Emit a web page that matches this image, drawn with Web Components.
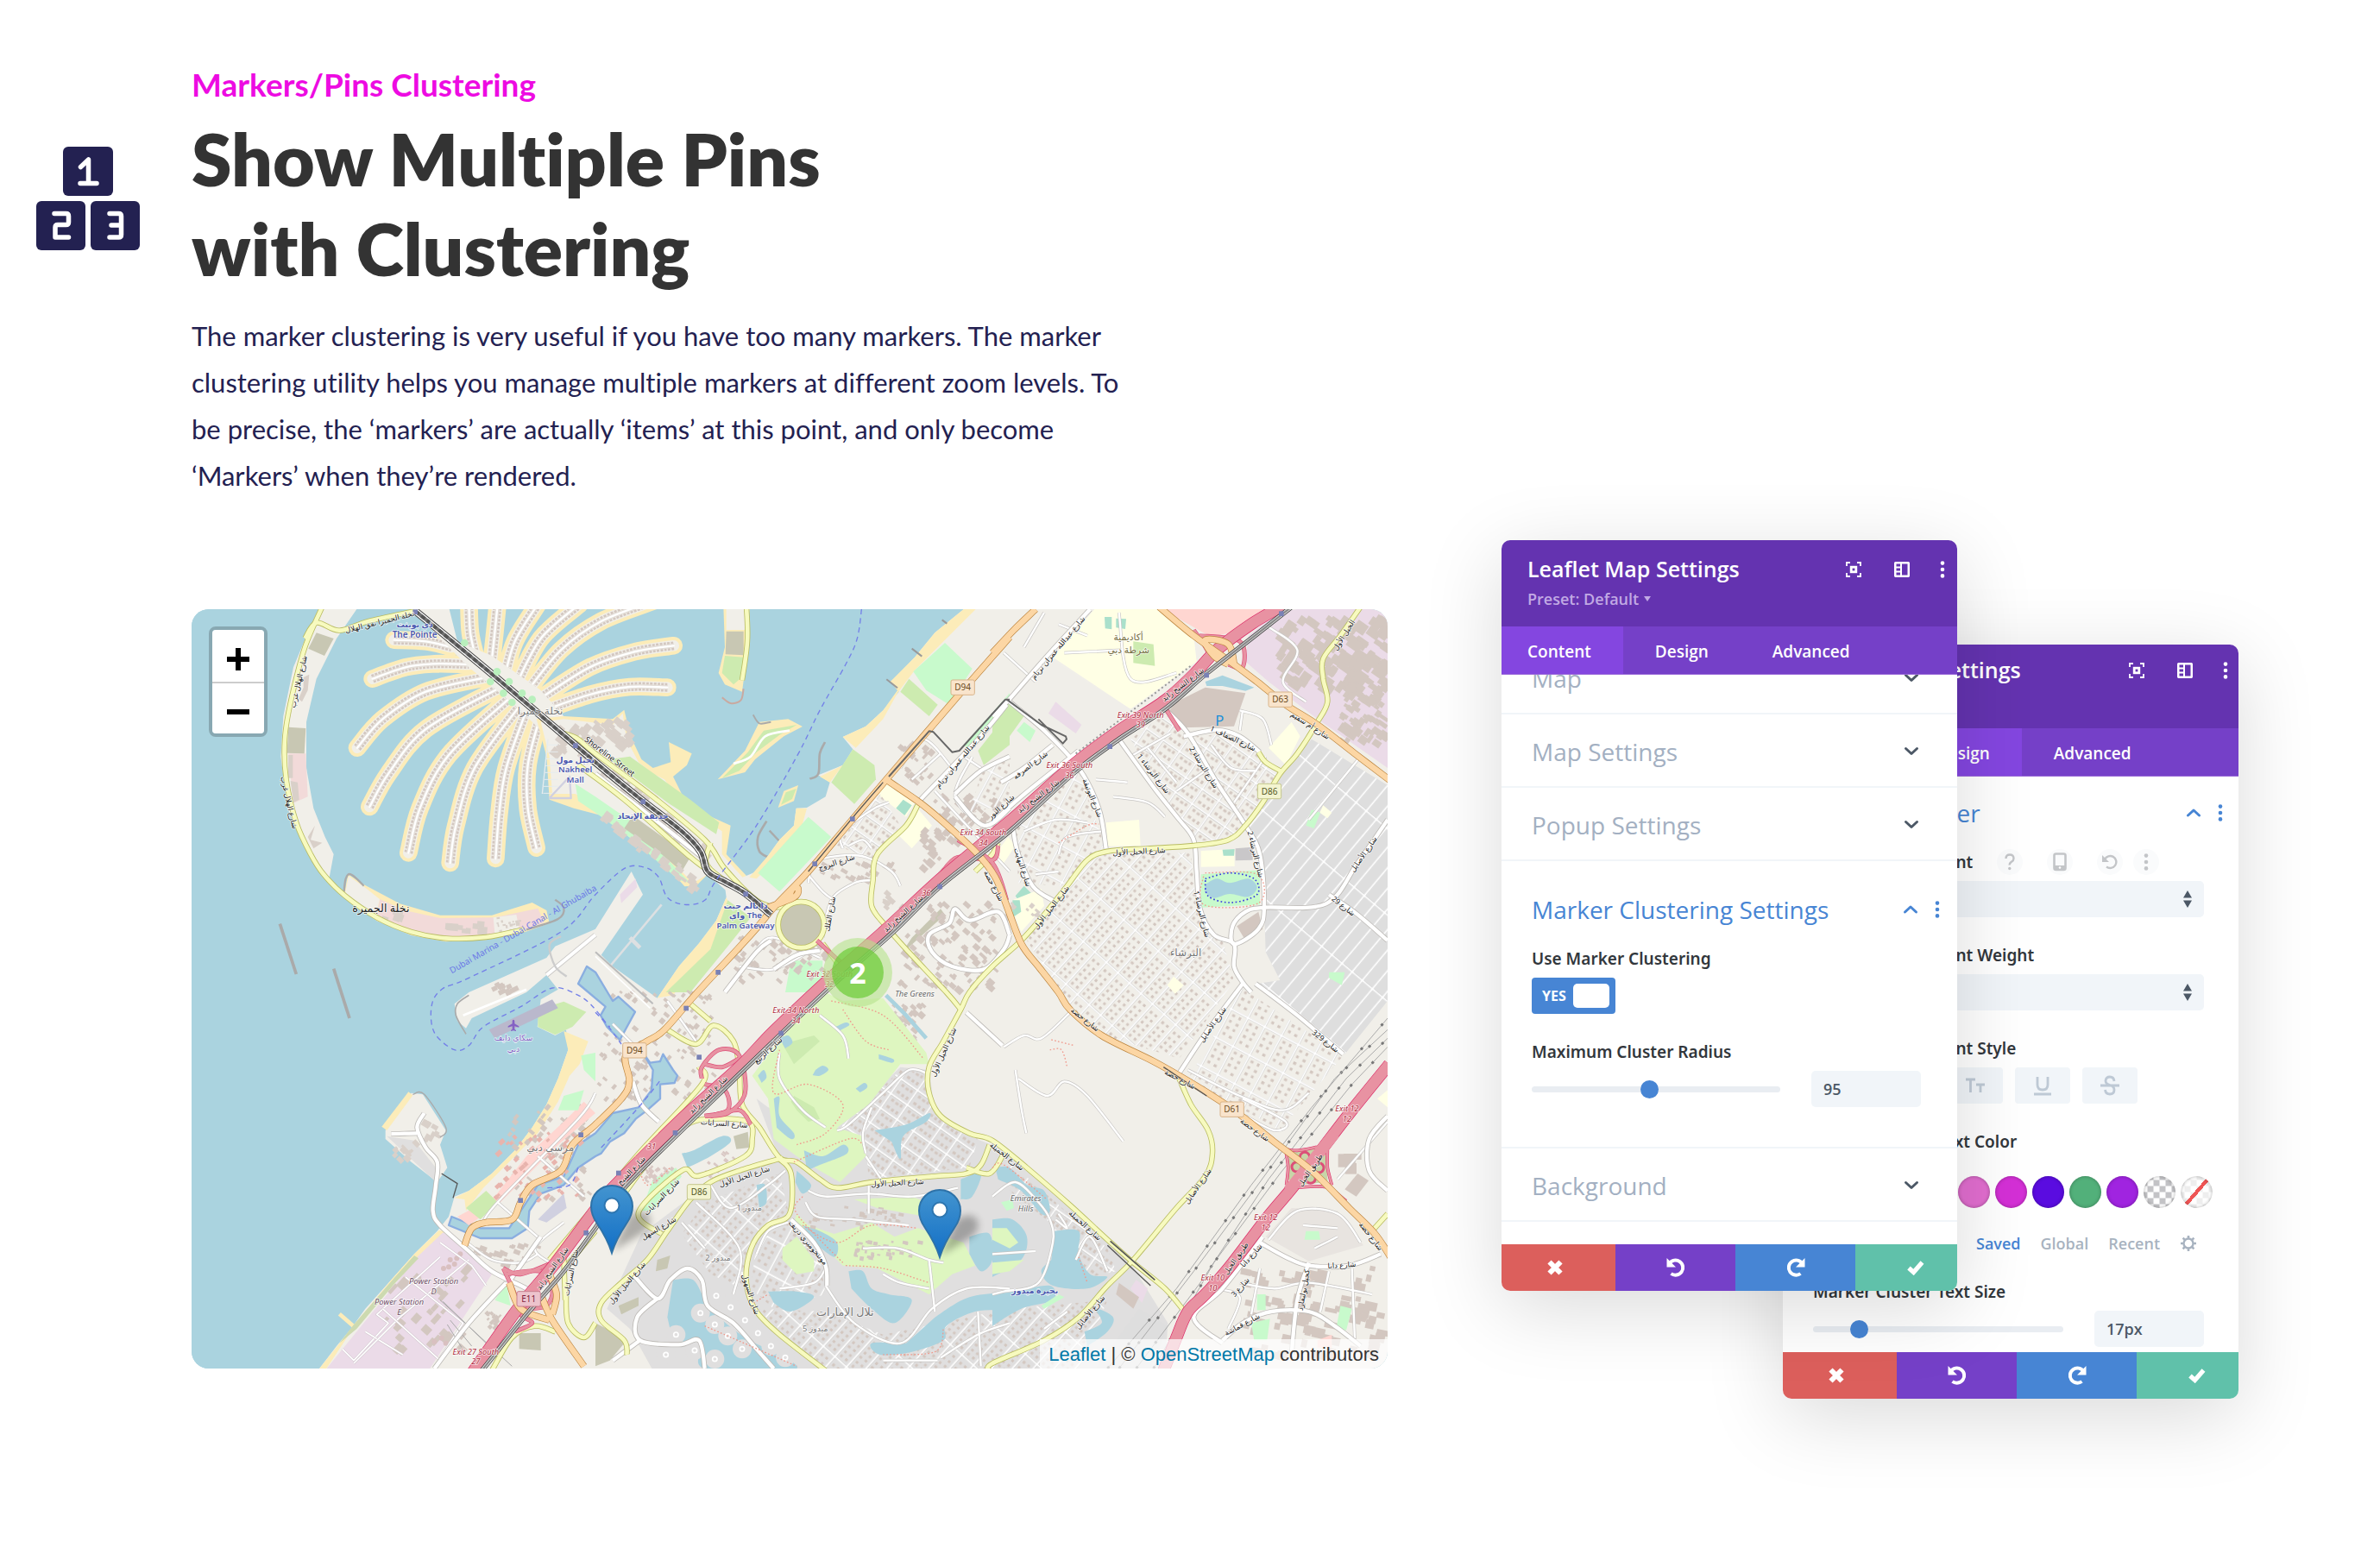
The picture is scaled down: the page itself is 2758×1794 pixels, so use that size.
<!DOCTYPE html>
<html lang="en">
<head>
<meta charset="utf-8">
<title>Markers/Pins Clustering</title>
<style>
body{margin:0;background:#fff;font-family:"Open Sans","Noto Sans",sans-serif}
</style>
</head>
<body>
<cluster-page></cluster-page>
<script>
const define=(name,html,setup)=>customElements.define(name,class extends HTMLElement{
  connectedCallback(){
    if(this.shadowRoot)return;
    const t=document.createElement('template');
    t.innerHTML=typeof html==='function'?html(this):html;
    this.attachShadow({mode:'open'}).append(t.content.cloneNode(true));
    if(setup)setup(this,this.shadowRoot);
  }
});

/* ---------- icons ---------- */
const ICONS={
  blocks:[120,120,'<g fill="#232151"><rect x="31" width="58" height="57" rx="6"/><rect y="63" width="57" height="57" rx="6"/><rect x="63" y="63" width="57" height="57" rx="6"/></g><g fill="none" stroke="#fff" stroke-width="5.5" stroke-linecap="round" stroke-linejoin="round"><path d="M51.500 23.500l9-8.500v27.500M51 42.500h19"/><path d="M21 77.500h13.500q3 0 3 3v7q0 3-3 3H25q-3 0-3 3v11.500h15.500M85 77.500h10.500q3 0 3 3v21.500q0 3-3 3H85M87 91h11"/></g>'],
  expand:[18,18,'<path d="M1 5V1h4M13 1h4v4M17 13v4h-4M5 17H1v-4" fill="none" stroke="currentColor" stroke-width="1.800"/><rect x="6.200" y="6.200" width="5.600" height="5.600" fill="none" stroke="currentColor" stroke-width="2.800"/>'],
  columns:[18,18,'<rect x="1.200" y="1.200" width="15.600" height="15.600" rx="1" fill="none" stroke="currentColor" stroke-width="2.600"/><path d="M8 1v16M2 6.500h6M2 11.500h6" stroke="currentColor" stroke-width="2"/>'],
  dots:[8,20,'<g fill="currentColor"><circle cx="4" cy="2.600" r="2.300"/><circle cx="4" cy="10" r="2.300"/><circle cx="4" cy="17.400" r="2.300"/></g>'],
  down:[18,12,'<path d="M2.500 2.500L9 8.500l6.500-6" fill="none" stroke="currentColor" stroke-width="3" stroke-linecap="round" stroke-linejoin="round"/>'],
  up:[18,12,'<path d="M2.500 9L9 3l6.500 6" fill="none" stroke="currentColor" stroke-width="3" stroke-linecap="round" stroke-linejoin="round"/>'],
  close:[18,18,'<path d="M2.500 2.500l13 13M15.500 2.500l-13 13" stroke="currentColor" stroke-width="6"/>'],
  undo:[24,24,'<path d="M4.500 7.200A8.600 8.600 0 1 1 6.500 19" fill="none" stroke="currentColor" stroke-width="4"/><path d="M1.500 1v10.500H12z" fill="currentColor"/>'],
  redo:[24,24,'<path d="M19.500 7.200A8.600 8.600 0 1 0 17.500 19" fill="none" stroke="currentColor" stroke-width="4"/><path d="M22.500 1v10.500H12z" fill="currentColor"/>'],
  check:[22,18,'<path d="M3 9.500l5.500 5L18.500 3" fill="none" stroke="currentColor" stroke-width="5.200"/>'],
  help:[14,20,'<path d="M2.500 6q0-4.500 4.500-4.500T11.500 6q0 2.200-2.500 3.800T6.800 13.500" fill="none" stroke="currentColor" stroke-width="2.400"/><circle cx="6.800" cy="17.500" r="1.700" fill="currentColor"/>'],
  phone:[16,22,'<rect x="1.500" y="1.500" width="13" height="18.500" rx="2" fill="none" stroke="currentColor" stroke-width="2.600"/><path d="M1.500 15h13v5h-13z" fill="currentColor"/><circle cx="8" cy="17.500" r="1.300" fill="#fff"/>'],
  reset:[18,18,'<path d="M3 6a7 7 0 1 1 2 8.500" fill="none" stroke="currentColor" stroke-width="2.400"/><path d="M0 1v8h8z" fill="currentColor"/>'],
  caps:[24,20,'<path d="M1 3h11M6.500 3v15M13 9h10M18 9v9" fill="none" stroke="currentColor" stroke-width="2.800"/>'],
  underline:[22,24,'<path d="M5 2v9q0 6 6 6t6-6V2M1 22h20" fill="none" stroke="currentColor" stroke-width="2.800"/>'],
  strike:[24,24,'<path d="M17 7q-.500-5-5-5T7 6.500q0 3.500 5 5t5 5.500q0 5-5 5t-5.500-5M1 12h22" fill="none" stroke="currentColor" stroke-width="2.800"/>'],
  gear:[20,20,'<circle cx="10" cy="10" r="5.500" fill="none" stroke="currentColor" stroke-width="2.400"/><path d="M10 1v3M10 16v3M1 10h3M16 10h3M3.600 3.600l2.200 2.200M14.200 14.200l2.200 2.200M3.600 16.400l2.200-2.200M14.200 5.800l2.200-2.200" stroke="currentColor" stroke-width="2.600"/>'],
  sort:[10,20,'<path d="M0 8.500L5 0l5 8.500zM0 11.500L5 20l5-8.500z" fill="currentColor"/>']
};
define('ui-icon',el=>{const [w,h,b]=ICONS[el.getAttribute('name')];
  return `<style>:host{display:block;flex:none}svg{display:block}</style><svg width="${w}" height="${h}" viewBox="0 0 ${w} ${h}" aria-hidden="true">${b}</svg>`});

/* ---------- intro ---------- */
define('intro-block',`<style>
:host{display:flex;gap:60px;align-items:flex-start;font-variant-ligatures:none}
ui-icon{margin-top:96px}
.copy{max-width:1120px}
.eyebrow{margin:0;font:700 37px/48px Lato,sans-serif;color:#ed0be2}
h1{margin:10px 0 22px;font:800 84px/104px Lato,sans-serif;color:#333}
.text{font:400 31px/54px Lato,sans-serif;color:#232151}
.eyebrow,h1,.text{font-variant-ligatures:none}
</style><ui-icon name="blocks"></ui-icon><div class="copy"><p class="eyebrow"><slot name="eyebrow"></slot></p><h1><slot name="title"></slot></h1><div class="text"><slot></slot></div></div>`);

/* ---------- map drawing ---------- */
const OFF={a:[0,0],b:[1440,0],c:[2820,0],d:[0,1350],e:[1440,1350],f:[2820,1350]};
const read=s=>{const P=[];let o='a';s.trim().split(/\s+/).forEach(t=>{if(OFF[t])o=t;else P.push(t.split(',').map((v,i)=>+v+OFF[o][i]))});return P};
const smooth=s=>{ // Catmull-Rom through every listed point
  const P=read(s);
  let d='M'+P[0];
  for(let i=0;i<P.length-1;i++){const a=P[i-1]||P[i],b=P[i],c=P[i+1],e=P[i+2]||c;
    d+=`C${[b[0]+(c[0]-a[0])/6,b[1]+(c[1]-a[1])/6,c[0]-(e[0]-b[0])/6,c[1]-(e[1]-b[1])/6].map(Math.round)},${c}`}
  return d;
};
const poly=s=>'M'+read(s).join('L')+'Z';
const line=s=>'M'+read(s).join('L');
const area=(fill,s,round)=>`<path fill="${fill}" d="${round?smooth(s)+'Z':poly(s)}"/>`;
const stroke=(c,w,d,x='')=>`<path fill="none" stroke="${c}" stroke-width="${w}" stroke-linejoin="round" ${x} d="${d}"/>`;
const roads=(list,casing,fill,w,e=5)=>list.map(s=>stroke(casing,w+e,smooth(s))).join('')+list.map(s=>stroke(fill,w,smooth(s))).join('');
let seed=7;const rnd=()=>(seed=(seed*16807)%2147483647)/2147483647;
const scatter=(o,x,y,w,h,n,ang,col='#d9d0c9',s=14)=>{let r='';for(let i=0;i<n;i++){const X=Math.round(OFF[o][0]+x+rnd()*w),Y=Math.round(OFF[o][1]+y+rnd()*h);r+=`<rect x="${X}" y="${Y}" width="${Math.round(s*(.6+rnd()))}" height="${Math.round(s*(.5+rnd()*.8))}" fill="${col}" transform="rotate(${ang} ${X} ${Y})"/>`}return r};

const WATER='#aad3df',LAND='#f1efe9',SAND='#fcecb9',RES='#e0dfdf',GOLF='#def6c0',PARK='#c8facc';
const fronds=['740,155 850,160 940,180','665,290 780,250 880,238 1000,240','612,530 700,430 850,335 1060,285','655,735 720,620 850,465 1110,320','790,895 830,740 930,555 1150,350','935,930 955,800 1020,600 1180,380','1093,915 1105,760 1130,600 1200,400','1235,878 1205,740 1205,590 1245,430','1000,30 1005,130 1025,220','1100,30 1090,130 1075,260','1240,30 1160,160 1120,300','1385,30 1250,150 1160,320','1640,20 1460,90 1320,190 1190,350','1712,175 1580,195 1420,250 1230,370','1690,320 1560,318 1420,345 1260,400'];

const mapArt=()=>{
let m=`<rect x="0" y="0" width="4230" height="2730" fill="${WATER}"/>`;
/* palm fronds */
m+=stroke(SAND,62,fronds.map(smooth).join(''),'stroke-linecap="round"');
m+=stroke(LAND,38,fronds.map(smooth).join(''),'stroke-linecap="round"');
m+=stroke('#d3c7c0',30,fronds.map(smooth).join(''),'stroke-dasharray="9 4"');
m+=stroke('#e4dfd9',15,fronds.map(smooth).join(''))+stroke('#fff',7,fronds.map(smooth).join(''),'stroke-linecap="round"');
/* crescent */
m+=area(LAND,'480,40 610,48 540,150 470,290 435,440 435,600 460,740 500,840 530,900 515,980 485,965 430,880 370,740 346,560 355,420 390,250 440,130');
m+=area(SAND,'565,1045 580,970 640,1008 760,1072 900,1112 1080,1112 1150,1090 1220,1068 1270,1095 1280,1140 1190,1172 1060,1198 920,1204 800,1182 680,1132');
m+=area('#f2dad9','690,1056 780,1096 900,1122 1090,1120 1240,1088 1262,1138 1190,1165 1060,1190 920,1195 800,1172 680,1120');
m+=area(LAND,'568,1045 582,976 640,1016 690,1056 676,1116')+area(LAND,'1085,1120 1165,1110 1175,1160 1090,1176');
m+=area('#f2dad9','372,550 433,550 440,700 390,722')+area('#c8c7b3','470,130 530,150 498,210 442,185')+area('#c8c7b3','373,458 433,462 428,550 368,548');
m+=area('#d9d0c9','425,285 445,275 440,330 420,370 408,360 425,320')+area('#d9d0c9','372,555 388,555 388,635 372,635')+area('#d9d0c9','380,645 405,650 410,710 390,720')+area('#d9d0c9','465,800 450,850 490,860 460,880 440,840');
m+=scatter('a',700,1085,60,30,5,20,'#d9d0c9',26)+scatter('a',830,1130,220,30,10,5,'#d9d0c9',26)+scatter('a',1090,1120,80,45,18,-10,'#d9d0c9',9);
m+=stroke('#aaa',7,smooth('566,1030 572,985 590,970 635,1010'))+stroke('#aaa',7,smooth('1300,1058 1330,1085 1310,1125 1200,1162'));
m+=area(SAND,'b 445,40 450,180 428,270 450,310 510,335 530,180 536,40')+area(LAND,'b 455,40 455,120 520,120 520,40')+area('#c8c7b3','b 455,125 515,125 515,208 452,205')+area('#cdebb0','b 450,210 515,215 515,280 480,310 440,270');
m+=stroke('#c9a9a0',6,smooth('b 515,325 505,365 470,375 440,355'));
/* trunk and shoreline street */
m+=area(LAND,'800,40 930,40 960,160 1080,210 1250,330 1330,420 1260,480 1180,400 1000,250 900,150');
m+=area(SAND,'1235,430 1330,420 b 60,430 100,398 122,490 160,570 200,600 262,580 255,510 335,550 318,590 270,630 300,690 380,760 470,800 455,900 525,975 490,1050 400,960 350,1010 310,1012 220,910 130,850 20,765 -75,740 -160,710 -170,560');
m+=area(LAND,'1250,440 1330,430 b 60,450 95,410 108,500 150,580 200,620 240,640 290,710 380,780 440,820 440,900 520,990 470,1040 390,970 340,1000 220,880 130,820 20,740 -70,690 -150,690 -160,560');
m+=area(PARK,'b -70,655 0,700 130,790 215,880 330,1000 290,990 130,850 0,755 -60,715');
m+=area('#cdebb0','b 50,570 120,560 330,710 430,790 420,830 250,720');
m+=area('#c8c7b3','b 130,765 330,910 300,960 230,900 100,810');
m+=scatter('a',1290,440,160,110,30,40,'#d9d0c9',28)+scatter('b',0,420,120,90,22,40,'#d9d0c9',24);
for(let i=0;i<14;i++)m+=scatter('b',20+i*26,600+i*21,50,25,4,38,'#d9d0c9',20)+scatter('b',i*24,745+i*18,50,25,3,38,'#d9d0c9',20);
m+=stroke('#e6ecee',4,line('1275,500 1255,690'));
for(let i=0;i<8;i++)m+=stroke('#e6ecee',3,line(`${1272-i*2},${520+i*24} ${1310},${520+i*24}`));
m+=stroke('#d0d0e0',7,line('1280,705 1350,630 1355,705 1280,705'));
/* lagoon islands */
m+=area('#fcecb9','b 425,640 520,540 570,440 670,430 720,456 655,490 555,570 520,615')+area('#cdebb0','b 440,635 530,545 585,470 700,450 640,485 560,545 500,610');
m+=stroke('#fff',8,smooth('b 480,585 540,560 590,490 675,470'))+area(SAND,'b 635,738 655,680 705,660 690,715')+area('#cdebb0','b 645,728 662,685 698,672 684,708');
m+=stroke('#aaa',8,smooth('b 798,510 780,550 775,620 745,638'))+stroke('#aaa',8,smooth('b 595,785 565,840 570,890 600,910'))+stroke('#aaa',7,line('b 605,818 640,855'))+stroke('#aaa',6,smooth('b 548,415 570,445 610,440'));
/* mainland */
m+=area(LAND,'b 1290,40 1180,130 1110,215 1030,300 1055,335 1000,400 940,455 860,492 895,535 860,590 775,625 815,650 800,700 735,738 698,740 690,800 640,850 600,905 560,960 500,985 450,1010 455,1050 420,1130 360,1210 290,1290 215,1400 e 60,-60 20,-100 165,-310 125,-390 0,-190 d 1300,-130 1270,-90 1000,30 950,70 960,130 990,155 1010,120 1200,30 1270,-30 1310,20 1250,55 1238,150 1300,180 1338,160 1345,230 1310,330 1270,420 1220,500 1160,580 1080,660 1000,720 950,740 930,810 890,860 810,940 730,1030 640,1130 590,1200 540,1260 475,1345 480,1500 a 4400,2900 4400,40');
m+=area(SAND,'b 1330,40 1220,150 1110,260 1050,340 1000,430 905,530 860,492 940,455 1000,400 1050,330 1025,300 1110,215 1180,130 1290,40')+area(SAND,'b 735,740 698,740 690,800 640,850 600,905 535,980 560,985 640,905 710,830');
m+=area(SAND,'b 455,1050 420,1130 360,1210 290,1290 215,1400 270,1390 400,1230 480,1110')+area(SAND,'b 860,590 780,630 815,650');
m+=area(SAND,'d 1330,165 1415,200 1385,280 1350,320 1310,410 1240,520 1120,640 1050,710 990,790 985,750 950,745 1000,720 1080,660 1160,580 1220,500 1270,420 1310,330 1345,230')+area(SAND,'d 895,858 810,940 730,1030 590,1200 475,1345 500,1345 600,1195 740,1030 830,945 920,860')+stroke(SAND,14,line('d 550,1148 600,1192'));
/* airstrip and peninsula */
m+=area('#cdebb0','d 1240,90 1330,62 1408,98 1360,150 1300,178 1240,150')+area('#bab8cc','d 1070,160 1290,55 1310,85 1090,190')+stroke('#aaa',5,smooth('d 990,175 955,110 960,70 1000,40'));
m+=area(LAND,'d 710,510 800,380 840,385 920,510 900,560 925,640 890,690 800,620 710,540')+area(SAND,'d 697,497 790,376 805,388 715,510')+area('#e0dfdf','d 715,530 810,545 885,640 880,685')+scatter('d',740,540,80,60,12,45,'#d9d0c9',16)+scatter('d',840,460,50,90,9,30,'#d9d0c9',22);
m+=stroke('#aaa',4,smooth('d 805,385 845,385 920,500 900,535'));
/* blocks of land use */
m+=area(PARK,'b 1215,165 1310,255 1230,380 1150,330 1105,265')+area('#cdebb0','b 1090,290 1190,380 1160,420 1060,335')+area('#cdebb0','b 895,535 970,590 975,640 900,725 820,650')+area(PARK,'b 740,770 820,840 640,1030 565,965');
m+=area('#cdebb0','b 460,1060 540,1120 460,1220 330,1380 245,1380 400,1230')+area(PARK,'b 680,1270 790,1270 790,1380 660,1380')+area('#cdebb0','b 1330,540 1440,400 1440,520 1350,590')+area(PARK,'b 1280,520 1440,340 1440,360 1300,540');
m+=area('#ffffe5','b 1010,650 1110,720 1080,770 980,690')+area('#ffffe5','b 1120,740 1170,800 1100,880 1050,830')+area('#aae0cb','b 1070,710 1100,730 1075,765 1045,740');
m+=area('#c8c7b3','b 1100,1190 1200,1090 1215,1110 1060,1250');
m+=area('#ffffe5','c 355,48 570,48 700,140 710,230 480,395 210,215')+area('#f0eee9','c 210,225 480,395 300,545 60,365 100,310')+area('#ffd6d1','c 590,48 980,48 870,120 760,145')+area('#cdebb0','c 0,420 50,370 110,420 60,490 0,560')+area(PARK,'c 110,440 150,470 130,510 85,470')+area('#ebdbe8','c 220,370 310,450 290,480 195,410');
m+=area('#ebdbe8','c 990,60 1060,48 1374,48 1374,600 1130,430 960,300 880,230 890,140')+scatter('c',1000,60,370,240,95,35,'#d3c7c0',34)+scatter('c',1210,280,150,220,60,35,'#d3c7c0',24);
m+=area('#d3c7c0','c 640,370 740,320 880,340 840,455 660,460 615,400')+area(WATER,'c 740,300 800,278 910,320 880,332 800,315 745,315');
m+=area('#aae0cb','c 390,75 415,75 415,118 392,115')+area('#aae0cb','c 430,80 465,82 462,117 430,112')+area('#cdebb0','c 490,160 560,170 565,245 490,235');
const grey='c 1110,500 1374,660 1400,1380 f 1374,60 1225,245 920,0 c 1000,1338 950,1240 945,1080 930,900 880,800 1000,620';
m+=area('#dedede',grey)+area('url(#lanes)',grey);
m+=area('url(#homesB)','c 380,900 690,895 710,1090 800,1200 840,1340 f 650,260 350,170 230,20 c 120,1200 200,1080 300,960');
m+=area('url(#homesC)','f 860,10 1220,250 1000,510 680,330 840,60')+area('url(#homesA)','c 480,500 600,410 720,560 870,790 830,845 700,855 620,740')+area('url(#homesA)','c 700,490 860,480 1000,620 880,790 780,640')+area('url(#homesC)','c 80,800 300,610 390,870 240,1010 90,1000');
m+=area('#d3c7c0','c 925,1100 940,1160 880,1200 850,1150')+area('#ffffe5','c 395,790 510,780 515,870 400,872')+area('#ffffe5','c 725,888 842,882 842,942 725,944')+area('#aae0cb','c 800,884 842,882 840,905 803,905')+area('#c9c7c9','c 845,880 905,875 905,920 845,922')+area(PARK,'c 725,970 930,955 930,1075 725,1085')+area(WATER,'c 740,1005 780,985 825,1000 890,985 920,1015 890,1048 825,1038 770,1052 738,1030',1);
m+=area('#ffffe5','c 1040,440 1070,490 1020,590 960,530')+area('#ffffe5','c 1150,730 1180,755 1165,775 1138,755')+area(PARK,'c 1110,745 1140,755 1118,810 1090,800')+area('#c8facc','c 1170,1310 1225,1310 1215,1355 1170,1330')+area('#ffffe5','c 630,1325 665,1355 635,1385 608,1355');
m+=area('#ffffe5','c 55,840 80,870 40,930 10,900')+area('#aae0cb','c 110,1010 140,1040 100,1075 80,1045')+area('#ffffe5','c 70,1060 170,1020 180,1080 100,1170 80,1120')+area('#aae0cb','c 70,1060 95,1060 100,1100 70,1120')+scatter('c',20,1060,160,60,16,40);
/* downtown blocks */
m+=area('url(#homesA)','b 900,790 990,690 1060,800 970,920 840,870')+scatter('b',1050,480,120,160,26,42,'#d3c7c0',17)+scatter('b',1180,680,250,160,60,42,'#d3c7c0',18)+area('url(#homesC)','b 1340,620 1440,560 1440,720 1300,760')+scatter('b',990,1000,40,90,8,42)+scatter('b',1120,800,150,150,28,42,'#d3c7c0',20)+scatter('b',780,920,260,60,26,30,'#d3c7c0',16)+scatter('b',480,1180,330,150,60,40,'#d3c7c0',17)+scatter('b',1060,1060,330,300,110,42,'#d3c7c0',18)+scatter('e',10,20,400,380,120,40,'#d3c7c0',15)+scatter('d',1140,400,280,340,70,40,'#d3c7c0',16)+scatter('e',960,60,180,130,50,42,'#d3c7c0',16);
m+=stroke(WATER,14,line('e 1010,40 1080,110 1150,190'));
/* power station */
m+=area('#ebdbe8','d 910,865 985,920 1080,1010 860,1345 500,1345 740,1050 820,950');
m+=scatter('d',680,1000,310,290,30,-48,'#d3c7c0',26);
[[935,960],[958,955],[970,940],[930,985],[950,975],[912,990],[880,1245],[905,1232],[920,1250]].forEach(([x,y])=>m+=`<circle cx="${x}" cy="${y+1350}" r="9" fill="#d9c0c0"/>`);
m+=area('#cddab0','d 810,945 825,955 740,1045 610,1200 550,1250 600,1185 730,1035');
['d 560,1270 600,1310 720,1180 680,1150 900,950','d 640,1210 770,1290','d 600,1320 760,1160 1000,960','d 700,1130 900,1310','d 780,1020 980,1180 900,1300','d 900,900 1010,980 1060,1050'].forEach(s=>m+=stroke('#cfc4cc',8,line(s))+stroke('#fff',5,line(s)));
/* golf, lakes and villas */
m+=area(RES,'e 160,870 400,690 640,610 560,400 600,430 840,500 1060,290 1160,300 1180,450 1300,530 1440,585 f 480,970 610,1180 600,1345 e 200,1345 120,1200 40,1130');
m+=area('url(#homesB)','e 380,760 640,660 670,790 540,880 510,1060 400,1010 300,870')+area('url(#homesA)','e 850,500 1060,300 1150,310 1180,450 1330,540 1300,640 950,680 940,560')+area('url(#homesC)','e 560,900 670,830 780,960 800,1080 620,1130 540,1060')+area('url(#homesB)','e 560,1130 800,1140 1000,1220 1440,1130 f 400,1100 300,1345 e 800,1345')+area('url(#homesA)','f 60,620 220,760 400,920 430,1000 250,1040 200,830 60,720');
m+=area(GOLF,'e 800,30 860,60 1000,50 1150,240 1160,280 1060,280 950,420 840,500 930,530 940,600 850,690 780,650 700,600 620,540 600,400 545,320 620,220 700,130');
m+=area('#cdebb0','e 690,390 760,430 780,470 740,480 700,440 680,410')+area('#cdebb0','e 650,210 760,180 780,200 690,280');
['e 640,190 670,180 685,205 660,225','e 765,300 790,285 810,300 780,320 755,318','e 565,320 585,300 595,325 578,345','e 835,150 870,135 882,145 845,165','e 905,365 935,345 945,360 920,378','e 985,245 1035,262 1030,275 985,262','e 620,400 640,395 640,460 690,520 680,540 630,500','e 725,580 790,600 860,560 875,590 780,630 735,650','e 700,650 750,700 720,730 695,690'].forEach(s=>m+=area(WATER,s,1));
m+=area(GOLF,'e 700,800 740,840 830,870 960,830 1040,880 1120,850 1280,900 1320,980 1240,1010 1160,1080 980,990 860,980 780,900 690,830')+area(GOLF,'e 650,920 700,880 760,960 760,1000 700,1010 650,960')+area(GOLF,'e 900,750 1100,740 1180,770 1150,810 980,780');
['e 970,510 1080,490 1160,450 1150,480 1070,530 1060,610 1030,550','e 720,840 780,860 840,900 830,950 760,900','e 880,1000 930,1000 960,1060 1020,1080 1100,1100 1040,1180 960,1130 890,1060','e 560,700 590,700 595,760 570,780','e 1300,880 1370,870 1380,960 1340,1000 1300,940','e 300,590 340,580 440,530 470,550 400,600 320,640','f 10,640 60,640 120,700 180,720 200,790 170,800 100,720 20,680','f 215,860 300,860 300,940 340,1010 400,1020 330,1060 210,1050 170,1000 205,960','f 0,1080 80,1070 200,1050 210,1100 100,1130 0,1190','f 320,1210 380,1180 360,1130 420,1160 400,1210 330,1260','f 0,820 70,820 120,880 100,960 0,1020','e 270,1030 340,1030 380,1100 420,1150 520,1230 700,1338 380,1338 370,1250 280,1240 250,1160','e 600,1070 700,1070 760,1090 680,1140 620,1110','e 1180,1160 1300,1090 1440,1080 1440,1130 1320,1140 1220,1190 1210,1240 1100,1280 990,1290 960,1250 1080,1250','e 1270,680 1340,660 1310,740 1270,750'].forEach(s=>m+=area(WATER,s,1));
m+=area(GOLF,'f 0,850 50,850 90,900 60,920 0,890')+area(GOLF,'f 0,970 110,960 60,1000 0,1010');
m+=area(PARK,'e 200,680 280,640 300,670 200,790 160,790')+area(PARK,'f 30,760 70,750 75,780 50,790')+area(PARK,'f 170,1120 230,1080 250,1090 180,1130')+area('#c8c7b3','e 480,530 530,515 535,570 490,575')+area('#c8c7b3','e 0,1180 80,1220 100,1250 50,1310 0,1330')+area('#c8c7b3','e 215,960 260,945 250,990 210,1000')+area('#c8c7b3','e 80,1120 150,1090 150,1120 90,1150');
m+=scatter('e',120,620,160,60,28,40,'#d9c8c4',12)+scatter('e',370,580,120,100,18,40,'#d9c8c4',12)+scatter('e',900,890,230,60,34,10,'#d3c7c0',12)+scatter('e',740,770,330,70,40,10,'#d3c7c0',12);
/* villa keys */
[[420,1085],[365,1145],[280,1220],[345,1275],[415,1305],[245,1290],[460,1225],[520,1170],[565,1215],[510,1270],[610,1260],[660,1300],[415,1185],[470,1125]].forEach(([x,y])=>m+=`<circle cx="${x+1440}" cy="${y+1350}" r="33" fill="${RES}"/><circle cx="${x+1440}" cy="${y+1350}" r="8" fill="none" stroke="#fff" stroke-width="5"/>`);
/* marina */
m+=`<g stroke="#8aaee0" stroke-width="7" stroke-linejoin="round">${area(WATER,'e 165,240 190,275 225,270 235,245 270,300 285,320 275,345 225,350 225,400 180,440 140,470 100,520 50,550 20,590 0,600 d 1380,640 1330,700 1250,730 1210,790 1205,850 1150,885 1040,885 930,840 940,810 1040,850 1140,850 1200,760 1240,700 1330,670 1380,560 1440,520 e 60,450 150,430 195,370 200,300')}${area(WATER,'e -30,-60 0,-40 60,60 80,45 138,98 85,195 40,150 18,110 35,80 -60,0')}</g>`;
m+=area('#ffd6d1','d 1400,410 1440,450 1310,560 1110,760 1000,840 960,810 1090,740 1200,600 1330,480')+scatter('d',1080,520,300,240,60,-42,'#e8b4ad',14);
m+=area(PARK,'d 1390,250 1440,240 1440,340 1400,300')+area(PARK,'d 1330,390 1400,370 1380,440 1310,440')+area('#cdebb0','d 990,780 1060,720 1100,760 1040,820');
m+=area('#d0d0e0','d 1240,820 1330,730 1340,780 1270,830')+scatter('d',1020,900,220,70,26,20,'#d3c7c0',16);
m+=area('#c8c7b3','d 1175,1215 1250,1215 1250,1275 1175,1270')+area(PARK,'d 1130,1040 1145,1120 1090,1100')+scatter('d',1050,1140,60,60,18,-45,'#d3c7c0',12);
/* south-east quarter */
m+=area('#e8e4e0','f 1040,780 1200,790 1290,910 1100,965 950,880')+scatter('f',860,980,480,300,80,12,'#d3c7c0',30)+area(PARK,'f 1090,860 1135,860 1140,890 1085,890')+area(PARK,'f 900,1180 965,1165 955,1240 910,1240')+area(PARK,'f 1210,1120 1250,1130 1230,1205 1195,1200')+area(PARK,'f 920,1080 950,1080 950,1135 920,1135')+area('#ffd6d1','f 1130,1240 1180,1220 1180,1265 1130,1265')+area('#d3c7c0','f 1270,660 1308,685 1265,740 1225,715')+scatter('f',1200,570,30,60,3,0,'#d3c7c0',40)+area('#ffffe5','f 1374,370 1338,400 1374,430');
m+=area('#dedede','f 510,1130 610,1190 550,1338 360,1338')+area('#ebdbe8','f 500,1030 540,1060 520,1110 480,1060')+area('#d3c7c0','f 440,1040 510,1090 490,1130 430,1080');
/* power lines */
['f 400,1338 640,1060 900,700 1110,430 1374,120','f 440,1338 700,1000 930,690 1190,330 1374,160','f 500,1338 730,1030 960,680 1230,330 1374,190','f 560,1338 770,970 1000,660 1250,350 1374,220'].forEach(s=>{m+=stroke('#aaa',3,line(s))+stroke('#777',9,line(s),'stroke-dasharray="9 100"')});
['d 900,1100 1150,1330','d 910,1105 1060,1250','d 925,1185 975,1265','d 935,1170 1010,1260'].forEach(s=>m+=stroke('#aaa',3,line(s)));
/* street network */
const minor=['b 880,800 970,740 1020,720','b 860,880 850,830 900,790','b 880,870 930,850 960,880','b 730,960 790,1030 830,1060','b 740,1000 760,930 850,905 940,910 1030,960 1060,1010','b 790,1190 820,1060 900,1000 960,990','b 1190,1010 1130,1050 1080,1110','b 1180,680 1440,960','b 1060,600 1140,500 1240,600','b 1100,640 1200,550','b 560,1230 620,1190 780,1260','b 500,1290 620,1300 740,1240','e 60,140 160,240','e 250,60 350,200','c 480,560 620,480','c 540,530 640,650','c 640,680 740,610','c 360,640 470,650','c 420,700 540,720 600,770','c 110,820 220,780 330,790','c 230,900 260,840 380,820','c 150,970 230,960','c 760,520 830,600 920,610','c 860,400 940,430 970,520','c 870,400 860,470','c 950,560 840,720','c 960,110 1060,190 1010,300 1090,370','c 840,240 900,280','c 110,180 180,60','c 40,200 150,300','c 440,60 480,290 640,270','c 250,200 450,190','c 230,100 330,140','d 1050,830 1100,760 1380,470 1440,380','d 1100,760 1250,890','d 1240,600 1400,740','d 1000,905 1080,960 1180,970 1240,940','d 1330,830 1230,920 1300,980','e 840,510 880,490 1010,370 1090,300 1150,310','e 940,590 930,520 960,430','e 940,600 1000,690','e 730,760 770,810 900,820 1090,840','e 740,720 800,740 950,730 1100,740 1260,710','e 950,700 950,800','e 930,920 1050,920 1160,960 1210,970','e 1000,1010 1060,1040 1160,1060','e 800,1050 900,1180 1060,1250 1170,1130 1290,1060 1440,1060','e 1160,960 1180,1140','e 640,1060 760,1040 800,990','e 560,940 600,860 670,830','e 1200,1300 1330,1220 1440,1180','e 1330,1140 1340,1330','e 1000,1310 1190,1310','e 400,700 470,780 600,700 660,650','e 350,760 500,920 480,1080','e 300,830 380,920','f 0,740 80,690 160,760 200,820 210,900 160,1040 40,1070 0,1080','f 0,940 150,930','f 230,800 260,850 220,820','f 290,960 340,880 400,1000','f 180,1200 260,1140','f 960,890 1060,790 1200,800 1280,900','f 1080,840 1200,850','f 1120,920 1200,880','f 1200,680 1374,480','f 870,400 1020,480 980,510 880,460','f 680,300 860,390 1010,440 1100,380','f 780,1060 860,1090 820,1200','f 860,1040 980,1060 1100,1040 1320,1080','f 1140,1140 1170,1000','f 900,1150 930,990','f 1250,990 1260,1240','f 90,330 190,390 250,340 330,390 455,548','f 80,300 100,430 118,520','f 40,220 110,180 170,190 270,100','c 1100,780 1280,560','b 1310,560 1250,700 1340,800','b 1340,600 1280,560','e 640,240 640,330 720,440 800,500','e 780,110 860,180 880,260'];
m+=roads(minor,'#c8c6c4','#fff',7,4);
m+=stroke('#c8c6c4',17,line('d 1270,-30 1440,-170'))+stroke('#fff',12,line('d 1270,-30 1440,-170'));
const white=['c 0,420 60,360 200,200 340,48','c 60,370 180,470 300,600 370,740 395,880','c 440,500 490,570 570,680 650,780 700,850 710,960 722,1090 770,1180 840,1212 840,1290 870,1345 900,1380','c 600,395 680,480 780,650 880,800 930,900 945,1080 925,1160 840,1212 835,1150 880,1100 945,1085 1160,1072 1270,930 1374,780','c 665,490 780,468 860,490 930,545','c 1170,1040 1270,1110 1374,1200','f 870,0 750,160 650,310','f 915,0 1060,110 1220,245','f 930,900 1020,950 1100,980 1240,980 1350,940','f 1100,970 1060,1100 1040,1290','f 800,1240 870,1180 970,1140 1100,1140 1190,1190 1280,1260','f 940,880 800,1060 700,1160 800,1250','f 1374,460 1310,540 1310,650 1374,720','c 0,790 100,700 300,540','c 30,650 110,600 210,520','c 70,800 90,900 140,1010 210,1060','b 1430,380 1330,500 1130,710','b 1250,690 1340,610 1440,560','b 1250,700 1350,800 1440,740','b 610,1200 560,1240 450,1380','b 620,1300 700,1250 780,1235','d 730,522 820,520','d 845,450 820,500 850,570 890,620 885,700 875,790 900,840 1000,930 1080,1000 1200,1060 1260,1110','e 130,340 160,420 220,480','e 130,1010 215,1095 260,1030 320,990 370,1030 390,1120 480,1180 560,1270 620,1338','e 215,1095 145,1160 155,1240 290,1255 360,1240 380,1338','e 155,1240 60,1310','e 680,820 760,900 800,980 805,1050','f -90,100 35,215','b 1440,1180 1400,1100 1300,1130 1250,1090 1230,1140 1160,1180 1170,1240 1240,1290 1350,1300 1420,1230 1440,1180','b 0,620 90,690 220,790 370,910','d 1250,880 1130,1050','d 1130,1040 1000,1180 880,1338'];
m+=roads(white,'#bdbab6','#fff',13,5);
const yellow=['c 1280,40 1210,140 1150,220 1150,290 1165,370 1130,440 1060,550 1000,620 940,720 880,800 820,850 700,870 540,880 400,890 330,920 260,1010 180,1110 100,1200 0,1290 b 1300,1380 e 1270,90 1210,200 1160,290 1160,380 1200,460 1300,520 1380,545 f 120,640 270,770 400,890 490,970 600,1060 660,1130','b 1120,730 1080,800 980,900 965,990 960,1080 1010,1150 1080,1230 1220,1380 e 1270,90','e 1370,560 1340,630 1290,660 1170,670 960,690 840,710 780,680 700,620 640,605 570,500 510,420 500,300 480,200 410,145 350,210 250,160','e 400,130 330,70','e 650,605 500,650 400,690 330,750 250,860 180,960 90,1040 20,1110 20,1170 100,1240 110,1290','e 640,610 680,660 675,800 600,840 550,900 525,990 530,1070 560,1140 640,1220 800,1345','e 100,730 200,600 310,495 400,470 530,480 545,540 520,600 360,668 300,650 150,795 230,870','f 645,320 690,420 750,510 765,590 740,670 640,780 490,960 400,1050 300,1160 180,1240 0,1320 e 1370,1345','c 925,545 950,580 1010,615','e 1290,640 1370,660 1420,590','f 1320,860 1374,800','490,40 430,180 385,350 360,500 365,640 400,790 450,900 495,970 570,1045 680,1120 800,1170 920,1192 1060,1188 1190,1162','430,150 470,95 550,122 650,90 810,55','b 525,40 528,160 510,295','1330,480 1380,500 b 0,550 200,700 380,850 450,950 560,1060 630,1085','b -60,590 100,710 330,910 400,960','b 400,860 385,930 440,985 560,1060','b 610,1085 660,1080 700,1050','d 1338,1080 1345,1180 1400,1230 1440,1180','d 1330,950 1335,1100','d 1080,1345 1150,1230 1230,1190 1300,1210','d 1280,960 1440,770 e 160,580 370,350 360,290','d 1340,980 1440,860','c 20,860 0,900 -60,960','b 790,1210 850,1290','e 540,240 680,90'];
m+=roads(yellow,'#b9bc62','#f7fabf',14,5);
m+=`<circle cx="2155" cy="1145" r="80" fill="#c8c7b3" stroke="#b9bc62" stroke-width="20"/><circle cx="2155" cy="1145" r="80" fill="none" stroke="#f7fabf" stroke-width="15"/>`;
const red=['d 1000,1370 1170,1130 1290,985 1440,785 e 60,710 300,470 500,290 620,165 800,-5 b 1000,1170 1200,985 1440,785 c 280,590 440,470 600,365 700,275 780,190 900,100 1020,30'];
const ramps=['e 380,460 460,450 520,380 500,250 430,230 370,290 370,330','e 380,350 450,370 460,440 380,460','e 380,280 440,290 500,260','e 400,460 500,440 540,490','d 1120,990 1180,1010 1290,970','d 1130,1010 1250,1000 1290,1060 1270,1120 1200,1130','d 1120,990 1160,1080 1180,1150 1220,1180 1160,1210','c 700,120 750,200 730,240','c 720,140 860,160 870,250 820,240','b 1200,970 1260,910 1380,920 1400,870','b 1260,850 1380,930 1430,1060','c 600,390 650,470','b 770,1200 860,1280 900,1290'];
m+=roads(ramps,'#dc4f78','#e892a2',11,4)+roads(red,'#dc2a67','#e892a2',38,4)+roads(['f 1380,280 1250,440 1150,570 1050,700 950,820 820,990 740,1080 680,1140 640,1230 595,1345'],'#dc2a67','#e892a2',38,4);
m+=area('#c8d5a8','f 1030,580 1120,575 1165,600 1165,690 1060,700 1028,680')+roads(['f 1000,572 1060,580 1130,568','f 1165,580 1165,640 1180,700','f 1020,580 1028,640 1022,700','f 1060,708 1120,705 1170,710 1230,755'],'#dc2a67','#e892a2',8,3);
[[1058,637],[1086,603],[1135,640],[1106,677]].forEach(([x,y])=>m+=`<circle cx="${x+2820}" cy="${y+1350}" r="17" fill="#c8d5a8" stroke="#dc4f78" stroke-width="9"/>`);
m+=stroke('#e892a2',40,line('f 1190,520 1030,720'));
const orange=['b 1440,145 1260,350 1020,630 880,795 740,960 620,1085 540,1180 350,1385 e 240,160 180,200 105,250 118,340 90,400 0,490 d 1360,560 1320,650 1220,700 1180,760 1150,820 1060,830 1010,850 985,910','b 1010,640 1120,715 1200,780 1320,890 1390,980 1430,1080 c 100,1210 160,1290 230,1380 f 270,90 380,180 560,270 700,350 840,440 980,550 1110,650 1240,780 1330,870 1390,960','c 580,40 700,140 840,240 920,300 1020,380 1130,450 1260,550 1385,645','c 840,240 820,170 740,155 770,210 820,240','c 0,200 75,120 150,48','d 1250,1080 1290,1170 1400,1330','b 600,1085 690,1050 705,1020 685,1020 670,1060','d 1140,1040 1180,1130 1280,1170','d 1280,1010 1305,1080 1290,1150'];
m+=roads(orange,'#bd8640','#fcd6a4',20,4);
/* rail */
const rail='a 815,55 1100,290 1440,580 b 165,715 300,820 365,890 390,960 450,995 520,1035 610,1110';
m+=stroke('#444',26,smooth(rail))+stroke('#fff',20,smooth(rail))+stroke('#707070',12,smooth(rail))+stroke('#555',12,smooth(rail),'stroke-dasharray="16 10"');
const metro='d 1045,1345 1200,1150 1330,1000 1440,850 e 100,710 330,480 640,180 830,0 b 1030,1175 1200,1010 1440,820 c 280,620 440,500 600,395 740,275 900,150 1040,40';
m+=stroke('#444',17,smooth(metro))+stroke('#eee',12,smooth(metro))+stroke('#8a8a8a',7,smooth(metro));
m+=stroke('#555',4,smooth('b 1000,650 880,790 740,960'))+stroke('#666',6,line('b 1440,362 1425,362 1265,540 1240,545 1175,475 1160,472 1020,630'))+stroke('#999',6,line('c 290,550 690,245'),'stroke-dasharray="6 9"')+stroke('#666',6,line('c 50,362 170,450 255,490 258,500 245,515 160,430'));
m+=stroke('#555',5,line('f 410,895 565,1030'))+stroke('#555',4,line('f 400,910 550,1050'))+stroke('#555',4,line('f 595,290 745,390'));
m+=stroke('#555',4,line('d 905,660 960,695 945,745'));
/* dashed ferry routes and footpaths */
const ferry=['b 925,48 910,150 870,240 780,400 700,560 560,800 420,990 380,1060 310,1075 250,1050 220,980 170,945 100,950 0,1040 a 1320,1170 1000,1330 905,1370 d 870,80 880,170 950,230 1000,215 1050,150 1180,80 1290,15 1380,40 1440,90 e 90,210','e 0,100 50,150','e 20,570 150,430 230,330','d 1380,640 1350,700 1270,710'];
ferry.forEach(s=>m+=stroke('#7480e8',4,smooth(s),'stroke-dasharray="18 14"'));
['e 640,230 620,380 740,350 860,420 800,520 700,560','e 820,60 1000,110 1140,260','e 860,90 940,200 1020,230','e 720,840 840,900 960,840 1120,850','e 870,980 1000,990 1160,1040','f 0,640 40,630 190,750','f 300,950 330,1040','e 720,740 700,800 860,970','e 690,620 880,540 930,560','f 205,195 285,215','f 200,230 240,230 260,290','c 740,965 920,970 925,1070 735,1075 735,970','c 230,860 330,800 370,795','e 550,1110 600,1080','e 380,1190 700,1330','e 1000,1290 1180,1280 1210,1200','e 140,600 180,700 260,640'].forEach(s=>m+=stroke('#f0998c',4,smooth(s),'stroke-dasharray="5 7"'));
m+=stroke('#3a3ae0',5,smooth('c 740,985 825,965 910,985 920,1040 830,1068 750,1045 740,985'),'stroke-dasharray="5 8"');
/* breakwaters */
m+=stroke('#aaa',11,line('343,1142 400,1317'))+stroke('#aaa',11,line('530,1298 585,1470'));
['b 1205,85 1222,98','b 1100,185 1135,212','b 1012,292 1050,322'].forEach(s=>m+=stroke('#999',6,line(s)));
m+=stroke('#dde0e2',8,line('b 230,1075 50,1290'))+stroke('#dde0e2',14,line('b 120,1190 155,1225'))+stroke('#ccc',7,smooth('a 1320,1185 1280,1215 1300,1290 1340,1325'));
m+=area('#ebdbe8','b 85,1040 140,985 145,1015 90,1070')+stroke('#bbb',6,line('b 0,1240 e 200,70'))+stroke('#fff',5,line('b 0,1255 e 190,85'));
m+=scatter('d',1040,0,110,30,8,-26,'#d3c7c0',20)+stroke('#fff',8,line('d 980,110 1200,20'));
/* stations */
['a 813,57','a 1370,522','b 165,717','b 522,1038','b 893,777','b 762,933','b 426,1310','b 1197,1012','c 408,525','c 744,277','c 1004,63','e 645,172','e 277,518','e 360,255','e 315,85','e 80,658','d 1407,866','d 1389,525','d 1179,753'].forEach(s=>{const o=s[0],[x,y]=s.slice(2).split(',').map(Number);m+=`<rect x="${x+OFF[o][0]-8}" y="${y+OFF[o][1]-8}" width="17" height="17" fill="#7981b5"/>`});
/* trees */
[[985,165],[1098,265],[1075,300],[1140,300],[1185,340],[1120,340],[1220,362],[1150,372]].forEach(([x,y])=>m+=`<circle cx="${x}" cy="${y}" r="13" fill="#b9f0bd"/>`);
/* plane */
m+='<path fill="#8461c4" d="M1155 1475q4 0 4 6v8l15 9v4l-15-4v10l5 4v3l-9-2-9 2v-3l5-4v-10l-15 4v-4l15-9v-8q0-6 4-6z"/>';
return m;
};
/* tile, x, y, angle, size, style, text; x and y give the middle of the label */
const LABELS=`a|812|101|0|28|st|ذي بوينت
a|812|137|0|30|st|The Pointe
a|690|92|-14|26|rd|نخلة الجميرا نفق الهلال
a|408|300|-77|26|rd|شارع الهلال غرب
a|375|720|77|26|rd|شارع الهلال غرب
a|1248|400|0|36|gr|نخلة جميرا
a|694|1088|0|38|bk|نخلة الجميرة
a|1370|572|0|28|st|نخيل مول
a|1370|605|0|29|st|Nakheel
a|1370|641|0|29|st|Mall
a|1490|560|37|28|rd|Shoreline Street
a|1188|1160|-30|30|fe|Dubai Marina - Dubai Canal - Al Ghubaiba
b|165|767|0|28|st|حديقة الإتحاد
b|522|1078|0|28|st|ذا بالم جيت
b|522|1113|0|29|st|واي The
b|522|1149|0|29|st|Palm Gateway
b|1277|320|0|30|so|D94
b|1276|560|-50|26|rd|شارع عبدالله عمران تريام
b|1410|735|-42|26|rd|شارع النور
b|1348|825|0|28|ex|Exit 34 South
b|1348|860|0|28|ex|34
b|838|928|-18|26|rd|شارع البروج
b|815|1108|-80|26|rd|شارع الفلك
b|1150|1034|0|28|ex|36
b|1070|1106|-42|26|rd|شارع الشيخ زايد
b|1385|1010|62|26|rd|شارع حصة
b|814|1316|0|28|ex|Exit 32 South
b|814|1353|0|28|ex|32
c|228|182|-50|26|rd|شارع عبدالله عمران تريام
c|473|145|0|32|ol|أكاديمية
c|473|190|0|32|ol|شرطة دبي
c|515|415|0|28|ex|Exit 39 North
c|515|450|0|28|ex|39
c|662|310|-37|26|rd|شارع الشيخ زايد
c|268|590|0|28|ex|Exit 36 South
c|268|627|0|28|ex|36
c|160|698|-37|26|rd|شارع الشيخ زايد
c|132|590|-37|26|rd|شارع الصرفه
c|348|704|68|26|rd|شارع البوتيقة
c|560|620|52|26|rd|شارع البرشاء 1
c|735|598|58|26|rd|شارع البرشاء 2
c|836|497|25|26|rd|شارع الصفاف 1
c|790|434|0|50|pk|P
c|1001|362|0|30|so|D63
c|963|681|0|30|sy|D86
c|1105|452|33|26|rd|شارع أم سقيم
c|1222|138|-58|26|rd|الخيل الأول
c|510|890|-3|26|rd|شارع الخيل الأول
c|205|1085|-52|26|rd|شارع الخيل الأول
c|105|945|72|26|rd|شارع النهايت
c|915|900|76|26|rd|شارع البرشاء 2
c|728|1108|76|26|rd|شارع البرشاء 1
c|1290|900|-55|26|rd|شارع الأصايل
c|1220|1080|38|26|rd|شارع 29
c|672|1240|0|36|gr|البرشاء
d|1155|188|0|28|pu|سكاي دايف
d|1155|226|0|28|pu|دبي
d|1283|570|0|36|gr|مرسى دبي
d|878|1033|0|28|ps|Power Station
d|878|1069|0|28|ps|D
d|758|1105|0|28|ps|Power Station
d|758|1141|0|28|ps|E
d|1024|1280|0|28|ex|Exit 27 South
d|1024|1312|0|28|ex|27
d|1290|990|-55|26|rd|شارع الشيخ زايد
d|1355|1005|-78|26|rd|شارع السرايات
d|1208|1096|0|30|se|E11
e|136|232|0|30|so|D94
e|697|92|0|28|ex|Exit 34 North
e|697|128|0|28|ex|34
e|1110|35|0|28|it|The Greens
e|600|232|-42|26|rd|شارع الربيع
e|392|386|-44|26|rd|شارع الشيخ زايد
e|448|486|4|26|rd|شارع السرايات
e|195|565|0|28|ex|31
e|125|650|-46|26|rd|شارع الشيخ
e|1210|238|-66|26|rd|شارع الخيل الأول
e|518|670|-18|26|rd|شارع الخيل الأول
e|360|724|0|30|sy|D86
e|230|742|-46|26|rd|شارع السرايات
e|220|850|-30|26|rd|شارع السهل
e|535|778|0|28|gr|ميدوز 1
e|426|954|0|28|gr|ميدوز 2
e|740|900|50|26|rd|مونتجوميري دريف
e|1050|692|-3|26|rd|شارع الخيل الأول
e|110|1040|-50|26|rd|شارع الخيل الأول
e|540|1080|72|26|rd|شارع السهول
e|868|1142|0|38|gr|تلال الإمارات
e|764|1200|0|28|gr|ميدوز 5
f|50|600|38|26|rd|شارع الخميلة
f|322|124|38|26|rd|شارع حصة
f|766|142|-55|26|rd|شارع الأصايل
f|652|332|28|26|rd|شارع حصة
f|1158|200|38|26|rd|شارع 329
f|833|437|0|30|so|D61
f|912|508|36|26|rd|شارع حصة
f|1233|434|0|28|ex|Exit 12
f|1233|470|0|28|ex|12
f|1105|648|-55|26|rd|طريق الخيل
f|116|747|0|28|it|Emirates
f|116|783|0|28|it|Hills
f|322|840|42|26|rd|شارع الخميلة
f|714|704|-55|26|rd|شارع الأصايل
f|950|811|0|28|ex|Exit 12
f|950|847|0|28|ex|12
f|1316|878|52|26|rd|شارع حصة
f|846|955|-55|26|rd|طريق الخيل
f|900|945|-48|26|rd|شارع دانا
f|1215|978|-4|26|rd|شارع دانا
f|766|1023|0|28|ex|Exit 10
f|766|1059|0|28|ex|10
f|862|1055|-48|26|rd|شارع 3
f|1082|1065|-80|26|rd|كحيل بوليفارد
f|148|1068|0|28|st|بحيرة ميدوز
f|340|1142|-50|26|rd|شارع الأصايل
f|868|1185|-28|26|rd|شارع قماشة`;
const SHIELD={so:['#f9e4cc','#d8b48a'],sy:['#f3f4d0','#c4c78c'],se:['#edc3cc','#c8808f']};
const labels=()=>LABELS.split('\n').map(l=>{const [o,x,y,a,s,c,t]=l.split('|');const X=+x+OFF[o][0],Y=+y+OFF[o][1];
  const sh=SHIELD[c]?`<rect x="${X-41}" y="${Y-26}" width="82" height="52" rx="6" fill="${SHIELD[c][0]}" stroke="${SHIELD[c][1]}" stroke-width="3"/>`:'';
  return sh+`<text class="${c}" x="${X}" y="${Y+Math.round(s*.36)}" font-size="${s}"${+a?` transform="rotate(${a} ${X} ${Y})"`:''}>${t}</text>`}).join('');

define('street-map',()=>`<style>:host{display:block}svg{display:block;width:100%;height:100%}
text{font-family:"Noto Sans","DejaVu Sans",sans-serif;text-anchor:middle;paint-order:stroke;stroke:#ffffffb0;stroke-width:5px;stroke-linejoin:round}
.st{fill:#4c59b0;font-weight:600}.rd{fill:#222}.gr{fill:#777}.bk{fill:#222}.fe{fill:#6b78e6;stroke:none}.ex{fill:#b02a3c;font-style:italic}.so{fill:#6b4a1c;stroke:none}.sy{fill:#55591f;stroke:none}.se{fill:#7d2340;stroke:none}.ol{fill:#777045}.pk{fill:#1c8fd8;stroke:none}.pu{fill:#8461c4}.ps{fill:#6f5068;font-style:italic}.it{fill:#666;font-style:italic}</style>
<svg viewBox="36 48 4158 2640" preserveAspectRatio="xMidYMid slice" role="img" aria-label="Street map of Dubai">
<defs>
<pattern id="homesA" width="70" height="62" patternUnits="userSpaceOnUse" patternTransform="rotate(35)"><path d="M0 4h70M4 0v62" stroke="#c8c6c4" stroke-width="10"/><path d="M0 4h70M4 0v62" stroke="#fff" stroke-width="6"/><path d="M18 14h10v10h-10zM36 16h12v9h-12zM54 13h9v11h-9zM17 42h12v10h-12zM37 43h10v10h-10zM55 41h9v12h-9z" fill="#d3c7c0"/></pattern>
<pattern id="homesB" width="150" height="54" patternUnits="userSpaceOnUse" patternTransform="rotate(-48)"><path d="M0 4h150M4 0v54" stroke="#c8c6c4" stroke-width="9"/><path d="M0 4h150M4 0v54" stroke="#fff" stroke-width="6"/><path d="M16 14h10v9h-10zM36 16h9v9h-9zM58 13h9v10h-9zM78 15h10v9h-10zM100 14h9v9h-9zM124 15h10v10h-10zM17 36h10v10h-10zM38 37h9v9h-9zM60 35h9v10h-9zM80 37h10v9h-10zM102 36h9v9h-9zM126 35h9v10h-9z" fill="#d3c7c0"/></pattern>
<pattern id="homesC" width="66" height="112" patternUnits="userSpaceOnUse" patternTransform="rotate(28)"><path d="M0 4h66M4 0v112" stroke="#c8c6c4" stroke-width="9"/><path d="M0 4h66M4 0v112" stroke="#fff" stroke-width="6"/><path d="M17 16h11v9h-11zM42 15h9v11h-9zM17 38h9v10h-9zM43 40h11v9h-11zM18 62h11v10h-11zM43 61h9v10h-9zM17 86h10v10h-10zM42 88h11v9h-11z" fill="#d3c7c0"/></pattern>
<pattern id="lanes" width="230" height="46" patternUnits="userSpaceOnUse" patternTransform="rotate(-50)"><path d="M0 4h230M4 0v46" stroke="#c4c4c4" stroke-width="9"/><path d="M0 4h230M4 0v46" stroke="#fff" stroke-width="6"/></pattern>
</defs>${mapArt()}${labels()}</svg>`);

define('map-pin',`<style>:host{display:block}svg{display:block}</style><svg width="90" height="84" viewBox="0 0 90 84" aria-label="Marker" role="img"><defs><linearGradient id="g" x1="0" y1="0" x2="0" y2="1"><stop offset="0" stop-color="#4394cf"/><stop offset="1" stop-color="#126fc6"/></linearGradient><filter id="s" x="-30%" y="-30%" width="160%" height="160%"><feGaussianBlur stdDeviation="4"/></filter></defs><path d="M26 78L44 38q14-12 24-2 6 14-12 24z" fill="#000" opacity=".28" filter="url(#s)"/><path d="M25 80Q20 64 8 46 1 36 1 26a24 24 0 0 1 48 0q0 10-7 20Q30 64 25 80z" fill="url(#g)" stroke="#2e72a8" stroke-width="2"/><circle cx="25" cy="25" r="8.500" fill="#fff" stroke="#2e76b0" stroke-width="2"/></svg>`);

define('leaflet-map',`<style>
:host{display:block;position:relative;height:880px;border-radius:20px;overflow:hidden;background:#aad3df}
street-map{height:100%}
.zoom{position:absolute;left:20px;top:20px;border:4px solid #0003;border-radius:8px;overflow:hidden;background-clip:padding-box}
button{display:block;box-sizing:border-box;width:60px;height:60px;padding:8px 0 0;border:0;background:#fff;color:#000}
button+button{border-top:2px solid #ccc}
button svg{display:block;margin:auto}
.bubble{position:absolute;left:55.700%;top:47.800%;margin:-40px 0 0 -40px;border:10px solid #b5e28c99;border-radius:50%;background:#b5e28c99;background-clip:padding-box}
.bubble span{display:block;width:60px;border-radius:50%;background:#6ecc39b8;color:#fff;font:700 34px/60px "Open Sans",sans-serif;text-align:center}
map-pin{position:absolute;margin:-80px 0 0 -25px}
.p1{left:35.150%;top:84.800%}.p2{left:62.550%;top:85.300%}
.credit{position:absolute;right:0;bottom:0;padding:2px 10px 0;background:#ffffffb3;font:22px/32px "Liberation Sans",Arial,sans-serif;color:#333}
a{color:#0078a8;text-decoration:none}
</style><street-map></street-map>
<div class="zoom"><button aria-label="Zoom in"><svg width="26" height="26"><path d="M0 13h26M13 0v26" stroke="#000" stroke-width="6"/></svg></button><button aria-label="Zoom out"><svg width="26" height="26"><path d="M0 13h26" stroke="#000" stroke-width="6"/></svg></button></div>
<div class="bubble"><span>2</span></div><map-pin class="p1"></map-pin><map-pin class="p2"></map-pin>
<div class="credit"><a href="#leaflet">Leaflet</a> | © <a href="#osm">OpenStreetMap</a> contributors</div>`);

/* ---------- settings windows ---------- */
define('settings-window',el=>`<style>
:host{display:flex;flex-direction:column;box-sizing:border-box;width:528px;border-radius:10px;overflow:hidden;background:#fff;font-family:"Open Sans","Noto Sans",sans-serif}
:host{box-shadow:0 20px 90px #00000026}
header{box-sizing:border-box;display:flex;align-items:flex-start;height:var(--head,100px);padding:var(--head-pad,17px) var(--tool-pad,13px) 0 30px;background:#6433b0;color:#fff}
.names{flex:1}
h2{margin:0;font-size:25px;line-height:32px;font-weight:600}
.preset{display:flex;align-items:center;gap:6px;margin-top:7px;padding:0;border:0;background:none;color:#c1a9e4;font:600 18px/24px "Open Sans",sans-serif}
.preset i{border:4px solid transparent;border-top:6px solid;border-bottom:0}
.tools{display:flex;gap:38px;align-items:center;padding-top:7px}
.tools ui-icon:last-child{margin-left:-4px}
nav{display:flex;height:56px;background:#7540c8;box-sizing:border-box;border-bottom:1px solid #9a6ad8;flex:none}
nav button{border:0;padding:2px 37px 0;background:none;color:#fff;font:600 19px/52px "Open Sans",sans-serif}
nav button:first-child{padding-left:30px}
nav button.on{background:#8446e0}
.body{flex:1;min-height:0;overflow:hidden}
footer{display:grid;grid-template-columns:132fr 139fr 139fr 118fr;height:54px;flex:none}
footer button{display:flex;align-items:center;justify-content:center;border:0;padding:0;color:#fff}
.x{background:#dc5f5c}footer .x{padding-right:8px}.u{background:#7540c8}.r{background:#4785d4}.c{background:#60c1aa}footer .c{padding-left:22px}
</style><header><div class="names"><h2>${el.getAttribute('heading')}</h2>${el.hasAttribute('preset')?`<button class="preset">Preset: ${el.getAttribute('preset')}<i></i></button>`:''}</div><div class="tools"><ui-icon name="expand"></ui-icon><ui-icon name="columns"></ui-icon><ui-icon name="dots"></ui-icon></div></header>
<nav>${['Content','Design','Advanced'].map(t=>`<button${t===el.getAttribute('tab')?' class="on"':''}>${t}</button>`).join('')}</nav>
<div class="body"><slot></slot></div>
<footer><button class="x" aria-label="Discard"><ui-icon name="close"></ui-icon></button><button class="u" aria-label="Undo"><ui-icon name="undo"></ui-icon></button><button class="r" aria-label="Redo"><ui-icon name="redo"></ui-icon></button><button class="c" aria-label="Save"><ui-icon name="check"></ui-icon></button></footer>`);

define('fold-row',`<style>:host{display:block;border-bottom:2px solid #f1f5f9}
button{display:flex;align-items:center;justify-content:space-between;box-sizing:border-box;width:100%;height:83px;padding:2px 44px 0 35px;border:0;background:none;color:#a3b0c2;font:400 28px/40px "Open Sans",sans-serif}
ui-icon{color:#4c5866}</style><button><slot></slot><ui-icon name="down"></ui-icon></button>`);

define('open-group',el=>`<style>:host{display:block;padding:17px 40px 0 35px}
button{display:flex;align-items:center;gap:18px;width:calc(100% + 23px);height:50px;padding:0;border:0;background:none;color:#4785d4;font:400 28px/50px "Open Sans",sans-serif;margin-bottom:20px}
.t{flex:1;text-align:left}
.fields{display:flex;flex-direction:column;gap:32px}</style><button><span class="t">${el.getAttribute('heading')}</span><ui-icon name="up"></ui-icon><ui-icon name="dots"></ui-icon></button><div class="fields"><slot></slot></div>`);

const LABEL='label,.label{display:block;font:600 19px/24px "Noto Sans",sans-serif;color:#32373c}';
define('switch-field',el=>`<style>:host{display:block}${LABEL}
.sw{display:flex;align-items:center;justify-content:space-between;box-sizing:border-box;width:97px;height:42px;margin-top:10px;padding:0 7px 0 12px;border-radius:4px;background:#4785d4;color:#fff;font:700 16px/42px "Open Sans",sans-serif}
input{appearance:none;margin:0;width:42px;height:28px;border-radius:5px;background:#fff}</style><label for="i">${el.getAttribute('label')}</label><div class="sw"><span>YES</span><input id="i" type="checkbox" checked></div>`);

define('range-field',el=>`<style>:host{display:block}${LABEL}
.row{display:flex;align-items:center;gap:36px;margin-top:10px}
input{margin:0;min-width:0}
[type=range]{appearance:none;flex:1;height:21px;background:none}
[type=range]::-webkit-slider-runnable-track{height:7px;border-radius:4px;background:#e9edf2}
[type=range]::-webkit-slider-thumb{appearance:none;width:21px;height:21px;margin-top:-7px;border-radius:50%;background:#4785d4}
[type=text]{box-sizing:border-box;width:127px;height:42px;padding:0 14px;border:0;border-radius:5px;background:#f1f5f9;color:#4c5866;font:600 18px/42px "Open Sans",sans-serif}</style>
<label for="r">${el.getAttribute('label')}</label><div class="row"><input id="r" type="range" min="1" max="${el.getAttribute('max')}" value="${parseInt(el.getAttribute('value'))}"><input type="text" aria-label="${el.getAttribute('label')}" value="${el.getAttribute('value')}"></div>`);

define('select-field',el=>`<style>:host{display:block}${LABEL}
.head{display:flex;align-items:center;height:24px}
.help{display:flex;flex:none;gap:12px;margin-left:28px;color:#c3c5c8}
.help span{display:grid;place-items:center;width:30px;height:30px;border-radius:50%;background:#fafbfc}
.help span:nth-child(-n+2){margin-right:16px}
.box{position:relative;margin-top:10px}
select{appearance:none;display:block;width:100%;height:42px;border:0;border-radius:5px;background:#f1f5f9}
ui-icon{color:#4c5866}.box ui-icon{position:absolute;right:14px;top:11px;width:10px}.help ui-icon{color:#c3c5c8}</style>
<div class="head"><label for="s">${el.getAttribute('label')}</label>${el.hasAttribute('tools')?'<div class="help">'+['help','phone','reset','dots'].map(n=>`<span><ui-icon name="${n}"></ui-icon></span>`).join('')+'</div>':''}</div><div class="box"><select id="s"></select><ui-icon name="sort"></ui-icon></div>`);

define('style-field',el=>`<style>:host{display:block}${LABEL}.row{display:flex;gap:14px;margin-top:10px}
button{display:grid;place-items:center;width:64px;height:42px;padding:0;border:0;border-radius:4px;background:#f1f5f9;color:#bec9d5}</style><div class="label">${el.getAttribute('label')}</div><div class="row"><button aria-label="Italic"></button><button aria-label="Uppercase"></button><button aria-label="Small caps"><ui-icon name="caps"></ui-icon></button><button aria-label="Underline"><ui-icon name="underline"></ui-icon></button><button aria-label="Strikethrough"><ui-icon name="strike"></ui-icon></button></div>`);

define('color-field',el=>`<style>:host{display:block}${LABEL}
.row{display:flex;justify-content:flex-end;gap:6px;margin:28px -10px 0 0}
.row button{width:37px;height:37px;padding:0;border:0;border-radius:50%;box-shadow:inset 0 0 4px #0000004d}
.check{background:repeating-conic-gradient(#c3c3c6 0 25%,#fff 0 50%) 50%/14px 14px}
.none{background:linear-gradient(131deg,#0000 46%,#ee5555 46% 54%,#0000 54%),repeating-conic-gradient(#eee 0 25%,#fff 0 50%) 50%/14px 14px}
.tabs{display:flex;align-items:center;justify-content:flex-end;gap:23px;margin:29px 8px 0 0;color:#a8b3c0}
.tabs button{border:0;padding:0;background:none;color:inherit;font:600 18px/24px "Open Sans",sans-serif}.tabs .on{color:#4785d4}</style>
<div class="label">${el.getAttribute('label')}</div><div class="row">${['#e26ed0','#d430d6','#5a0ce0','#52b07a','#a024e0'].map(c=>`<button aria-label="${c}" style="background:${c}"></button>`).join('')}<button class="check" aria-label="Transparent"></button><button class="none" aria-label="None"></button></div>
<div class="tabs"><button class="on">Saved</button><button>Global</button><button>Recent</button><ui-icon name="gear"></ui-icon></div>`);

define('cluster-page',`<style>
:host{display:block;padding:74px 164px 173px 42px}
.stage{display:flex;align-items:flex-start;gap:132px;margin:48px 0 0 180px}
leaflet-map{flex:1;margin-top:80px}
.windows{display:flex;align-items:flex-start}
.one{position:relative;z-index:1;height:870px}
.one fold-row:first-child{margin-top:-39px}
.one open-group{padding:31px 42px 46px 35px;border-bottom:2px solid #f1f5f9}
.two{--head:97px;--head-pad:13px;--tool-pad:11px;height:874px;margin:121px 0 0 -202px}
</style>
<intro-block><span slot="eyebrow">Markers/Pins Clustering</span><span slot="title">Show Multiple Pins<br>with Clustering</span>The marker clustering is very useful if you have too many markers. The marker<br>clustering utility helps you manage multiple markers at different zoom levels. To<br>be precise, the ‘markers’ are actually ‘items’ at this point, and only become<br>‘Markers’ when they’re rendered.</intro-block>
<div class="stage"><leaflet-map></leaflet-map><div class="windows">
<settings-window class="one" heading="Leaflet Map Settings" preset="Default" tab="Content">
<fold-row>Map</fold-row><fold-row>Map Settings</fold-row><fold-row>Popup Settings</fold-row>
<open-group heading="Marker Clustering Settings"><switch-field label="Use Marker Clustering"></switch-field><range-field label="Maximum Cluster Radius" max="200" value="95"></range-field></open-group>
<fold-row>Background</fold-row></settings-window>
<settings-window class="two" heading="Leaflet Map Settings" tab="Design"><open-group heading="Marker Cluster"><select-field label="Marker Cluster Font" tools></select-field><select-field label="Marker Cluster Font Weight"></select-field><style-field label="Marker Cluster Font Style"></style-field><color-field label="Marker Cluster Text Color"></color-field><range-field label="Marker Cluster Text Size" max="100" value="17px"></range-field></open-group></settings-window>
</div></div>`);
</script>
</body>
</html>
